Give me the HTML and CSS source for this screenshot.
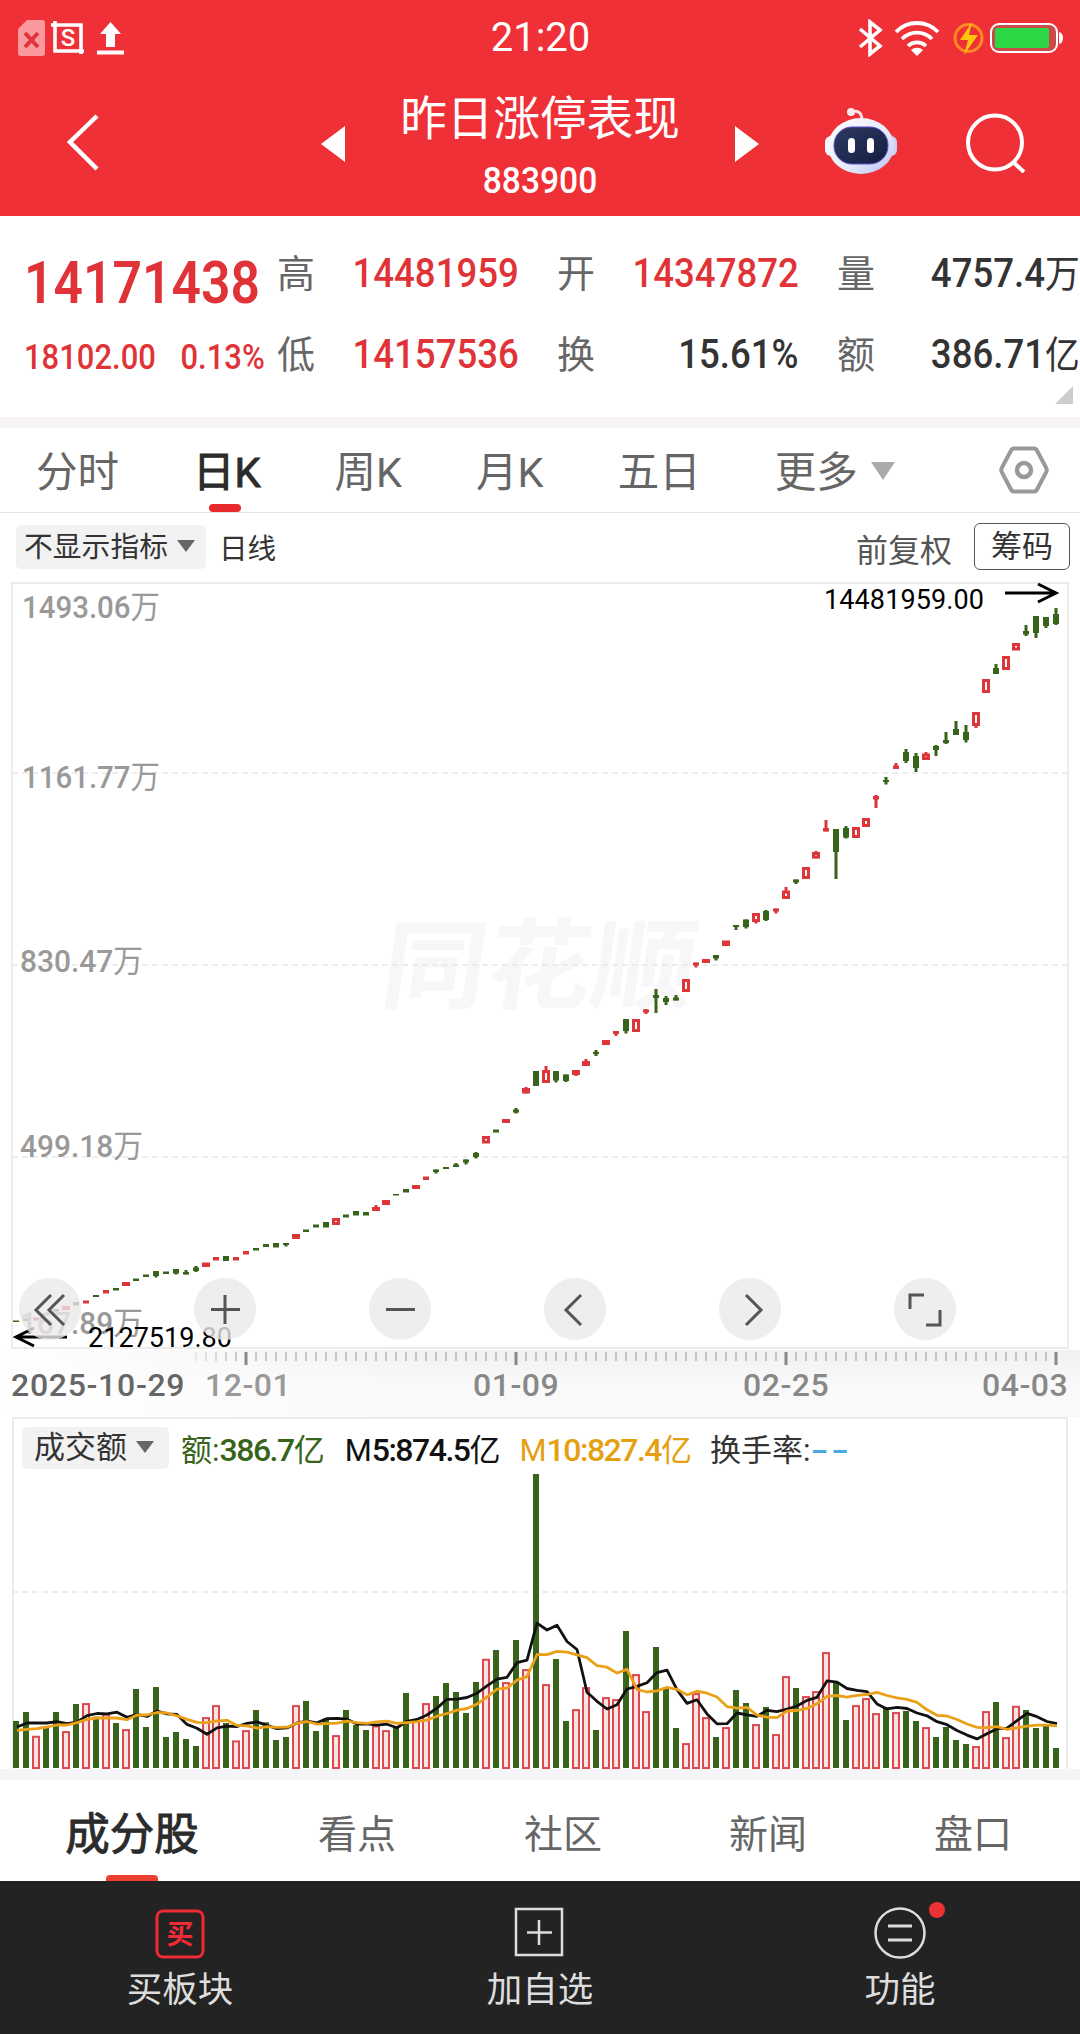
FILE: index.html
```html
<!DOCTYPE html>
<html lang="zh-CN">
<head>
  <meta charset="UTF-8" />
  <meta name="viewport" content="width=device-width, initial-scale=1.0" />
  <title>昨日涨停表现 883900</title>
  <link rel="stylesheet" href="styles.css">
</head>
<body>
  <header class="header">
    <div class="status-bar">
      <div class="status-left">
        <svg width="110" height="38" viewBox="0 0 110 38">
          <path d="M9 1h15a3 3 0 0 1 3 3v30a3 3 0 0 1-3 3H3a3 3 0 0 1-3-3V10z" fill="#fb9a9e"/>
          <path d="M7 14l13 14M20 14L7 28" stroke="#e0333b" stroke-width="4"/>
          <path d="M33 6h30v29M37 2v30h29" fill="none" stroke="#fff" stroke-width="3.6"/>
          <text x="50" y="27" class="crop-letter">S</text>
          <path d="M92.500 3l10.500 12h-6v13h-9V15h-6z" fill="#fff"/>
          <path d="M79 33.500h27" stroke="#fff" stroke-width="4"/>
        </svg>
      </div>
      <div class="clock">21:20</div>
      <div class="status-right">
        <svg width="206" height="38" viewBox="0 0 206 38">
          <path d="M3 10l20 17-10 8V3l10 8L3 28" fill="none" stroke="#fff" stroke-width="3.600"/>
          <g fill="none" stroke="#fff" stroke-width="3.800">
            <path d="M39 13a29 29 0 0 1 42 0"/>
            <path d="M45 20a21 21 0 0 1 30 0"/>
            <path d="M51 27a13 13 0 0 1 18 0"/>
          </g>
          <path d="M60 37l-6-6a9 9 0 0 1 12 0z" fill="#fff"/>
          <circle cx="111.500" cy="19" r="13.500" fill="none" stroke="#ff8a22" stroke-width="3"/>
          <path d="M115 3L103 21h8l-4 15 14-20h-9z" fill="#ffc60a"/>
          <rect x="134" y="5" width="66" height="28" rx="8" fill="#c94a48" stroke="#fff" stroke-width="2"/>
          <rect x="138" y="9" width="54" height="20" rx="2" fill="#2bd744"/>
          <path d="M202 13q4 1 4 6t-4 6z" fill="#fff"/>
        </svg>
      </div>
    </div>

    <div class="title-bar">
      <svg class="back" width="34" height="58" viewBox="0 0 34 58"><path d="M32 2L5 28l27 27" fill="none" stroke="#fff" stroke-width="4.500"/></svg>
      <svg class="prev" width="24" height="36" viewBox="0 0 24 36"><path d="M24 0v36L0 18z" fill="#fff"/></svg>
      <div class="title">
        <h1>昨日涨停表现</h1>
        <div class="code num">883900</div>
      </div>
      <svg class="next" width="24" height="36" viewBox="0 0 24 36"><path d="M0 0v36l24-18z" fill="#fff"/></svg>
      <svg class="robot" width="72" height="68" viewBox="0 0 72 68">
        <defs>
          <linearGradient id="shell" x1="0" y1="0" x2="1" y2="1">
            <stop offset="0" stop-color="#fff"/>
            <stop offset=".6" stop-color="#e4e9fb"/>
            <stop offset="1" stop-color="#b9bdf0"/>
          </linearGradient>
          <linearGradient id="face" x1="0" y1="0" x2="1" y2="1">
            <stop offset="0" stop-color="#2d3a63"/>
            <stop offset="1" stop-color="#151d40"/>
          </linearGradient>
        </defs>
        <path d="M26 5q10-3 11 7" fill="none" stroke="#fbe4ea" stroke-width="3"/>
        <circle cx="26" cy="5" r="4" fill="#fde9ee"/>
        <rect x="0" y="29" width="12" height="20" rx="6" fill="#f3f5ff"/>
        <rect x="60" y="29" width="12" height="20" rx="6" fill="#cdd2f6"/>
        <ellipse cx="36" cy="39" rx="33" ry="28" fill="url(#shell)"/>
        <rect x="9" y="20" width="54" height="37" rx="18" fill="url(#face)" stroke="#5a52c8" stroke-width="1"/>
        <rect x="23" y="31" width="7" height="15" rx="3.500" fill="#fff"/>
        <rect x="42" y="31" width="7" height="15" rx="3.500" fill="#fff"/>
      </svg>
      <svg class="search" width="62" height="62" viewBox="0 0 62 62"><circle cx="29" cy="31.500" r="27" fill="none" stroke="#fff" stroke-width="4"/><path d="M47 51l11 10" stroke="#fff" stroke-width="4"/></svg>
    </div>
  </header>

  <section class="quote">
    <div class="price">
      <div class="last num">14171438</div>
      <div class="change num"><span>18102.00</span><span>0.13%</span></div>
    </div>
    <dl class="stats">
      <div><dt>高</dt><dd class="num up">14481959</dd></div>
      <div><dt>开</dt><dd class="num up">14347872</dd></div>
      <div><dt>量</dt><dd class="num">4757.4<i>万</i></dd></div>
      <div><dt>低</dt><dd class="num up">14157536</dd></div>
      <div><dt>换</dt><dd class="num">15.61%</dd></div>
      <div><dt>额</dt><dd class="num">386.71<i>亿</i></dd></div>
    </dl>
    <span class="corner"></span>
  </section>

  <nav class="period-tabs">
    <a>分时</a>
    <a class="active">日K</a>
    <a>周K</a>
    <a>月K</a>
    <a>五日</a>
    <a class="more">更多<span class="caret"></span></a>
    <svg width="50" height="48" viewBox="0 0 50 48"><path d="M15 2.500h20q2 0 3 2l9 17q1.500 2.500 0 5l-9 17q-1 2-3 2H15q-2 0-3-2l-9-17q-1.500-2.500 0-5l9-17q1-2 3-2z" fill="none" stroke="#999" stroke-width="4"/><circle cx="25" cy="24" r="7" fill="none" stroke="#999" stroke-width="4.500"/></svg>
  </nav>

  <div class="chart-tools">
    <button class="chip">不显示指标<span class="caret dark"></span></button>
    <span class="line-type">日线</span>
    <span class="adjust">前复权</span>
    <button class="outline">筹码</button>
  </div>

  <div class="kline">
    <svg id="kline" width="1080" height="768" viewBox="0 582 1080 768">
      <text class="watermark" transform="translate(378 1001) skewX(-8)" textLength="314" lengthAdjust="spacingAndGlyphs">同花顺</text>
      <path class="frame" d="M12 1348V583h1056v765z"/>
      <path class="grid" d="M12 773h1056M12 965h1056M12 1157h1056"/>
      <g id="candles"></g>
      <g class="scale num">
        <text x="22" y="618" textLength="138" lengthAdjust="spacingAndGlyphs">1493.06<tspan class="unit">万</tspan></text>
        <text x="22" y="788" textLength="138" lengthAdjust="spacingAndGlyphs">1161.77<tspan class="unit">万</tspan></text>
        <text x="20" y="972" textLength="123" lengthAdjust="spacingAndGlyphs">830.47<tspan class="unit">万</tspan></text>
        <text x="20" y="1157" textLength="123" lengthAdjust="spacingAndGlyphs">499.18<tspan class="unit">万</tspan></text>
        <text x="20" y="1334" textLength="123" lengthAdjust="spacingAndGlyphs">167.89<tspan class="unit">万</tspan></text>
      </g>
      <g class="extreme">
        <text x="824" y="609" textLength="160">14481959.00</text>
        <path d="M1005 593h50M1038 584l18 9-18 9"/>
        <text x="88" y="1346.500" textLength="144">2127519.80</text>
        <path d="M67 1337H18M34 1328l-18 9 18 9"/>
      </g>
    </svg>
    <div class="zoom-buttons">
      <button><svg viewBox="0 0 62 62"><path d="M32 17L17 32l15 15M45 17L30 32l15 15"/></svg></button>
      <button><svg viewBox="0 0 62 62"><path d="M31 17v29M17 31.500h29"/></svg></button>
      <button><svg viewBox="0 0 62 62"><path d="M17 31.500h29"/></svg></button>
      <button><svg viewBox="0 0 62 62"><path d="M37 17L22 32l15 15"/></svg></button>
      <button><svg viewBox="0 0 62 62"><path d="M27 17l15 15-15 15"/></svg></button>
      <button><svg viewBox="0 0 62 62"><path d="M16 31V17h14M46 32v15H32"/></svg></button>
    </div>
  </div>

  <div class="axis">
    <svg id="ticks" width="1080" height="18" viewBox="0 0 1080 18"></svg>
    <div class="dates num">
      <span class="from">2025-10-29</span>
      <span class="d1">12-01</span>
      <span class="d2">01-09</span>
      <span class="d3">02-25</span>
      <span class="d4">04-03</span>
    </div>
  </div>

  <div class="volume">
    <div class="legend">
      <button class="chip">成交额<span class="caret dark"></span></button>
      <span class="amount">额:<b class="num">386.7</b>亿</span>
      <span class="m5">M<b class="num">5:874.5</b>亿</span>
      <span class="m10">M<b class="num">10:827.4</b>亿</span>
      <span class="turnover">换手率:<b>--</b></span>
    </div>
    <svg id="volume" width="1056" height="304" viewBox="12 1465 1056 304">
      <path class="grid" d="M12 1592h1056"/>
    </svg>
  </div>

  <nav class="info-tabs">
    <a class="active">成分股</a>
    <a>看点</a>
    <a>社区</a>
    <a>新闻</a>
    <a>盘口</a>
  </nav>

  <footer class="bottom-bar">
    <a>
      <svg width="52" height="52" viewBox="0 0 52 52"><rect x="3" y="4" width="46" height="46" rx="6" fill="none" stroke="#ef2b35" stroke-width="3"/><text x="26" y="37" class="buy">买</text></svg>
      <span>买板块</span>
    </a>
    <a>
      <svg width="52" height="52" viewBox="0 0 52 52"><path d="M2 2h46v46H2zM25 13v25M13 25.500h25" fill="none" stroke="#ddd" stroke-width="2.500"/></svg>
      <span>加自选</span>
    </a>
    <a>
      <svg width="52" height="52" viewBox="0 0 52 52"><circle cx="26" cy="26" r="24.500" fill="none" stroke="#ddd" stroke-width="2.500"/><path d="M14 19h24M14 33h24" stroke="#ddd" stroke-width="3"/></svg>
      <i class="dot"></i>
      <span>功能</span>
    </a>
  </footer>

  <script src="chart.js"></script>
</body>
</html>
```
FILE: styles.css
```css
* {
  box-sizing: border-box;
}

body {
  margin: 0;
  width: 1080px;
  font-family: Roboto, "Noto Sans CJK SC", sans-serif;
  background-color: #fff;
  color: #333;
}

svg {
  display: block;
  flex: none;
}

button {
  border: none;
  padding: 0;
  font-family: inherit;
  color: inherit;
}

i {
  font-style: normal;
}

.num {
  font-family: Roboto, "Noto Sans CJK SC", sans-serif;
  font-weight: 500;
}

.up {
  color: #e03338;
}

/* header */
.header {
  height: 216px;
  background-color: #ef3036;
  color: #fff;
}

.status-bar {
  height: 74px;
  display: grid;
  grid-template-columns: 1fr 120px 1fr;
  align-items: center;
  padding: 0 17px 0 18px;
}

.status-right {
  display: flex;
  justify-content: flex-end;
}

.clock {
  font-size: 40px;
  text-align: center;
  line-height: 76px;
}

.crop-letter {
  font: 500 24px Roboto, sans-serif;
  fill: #fff;
  text-anchor: middle;
}

.title-bar {
  height: 142px;
  display: flex;
  padding-left: 65px;
}

.back {
  margin-top: 40px;
}

.prev {
  margin: 52px 0 0 222px;
}

.title {
  width: 390px;
  text-align: center;
}

h1 {
  margin: 11px 0 0;
  font-size: 46.6px;
  font-weight: 400;
  line-height: 68px;
}

.code {
  font-size: 36.500px;
  line-height: 40px;
  margin-top: 8px;
  transform: scaleX(0.92);
}

.next {
  margin-top: 52px;
}

.robot {
  margin: 33px 0 0 66px;
}

.search {
  margin: 37px 0 0 69px;
}

/* quote */
.quote {
  position: relative;
  height: 212px;
  display: flex;
  border-bottom: 11px solid #f7f3f4;
}

.price {
  width: 277px;
  padding: 35px 0 0 24px;
  color: #e03338;
}

.last {
  font-size: 59px;
  font-weight: 600;
  line-height: 64px;
  transform: scaleX(0.875);
  transform-origin: left;
}

.change {
  display: flex;
  width: 272px;
  justify-content: space-between;
  font-size: 35px;
  line-height: 40px;
  margin-top: 23px;
  transform: scaleX(0.885);
  transform-origin: left;
}

.stats {
  margin: 0;
  padding-top: 27px;
  flex: 1;
  display: grid;
  grid-template-columns: 242px 280px 281px;
  grid-auto-rows: 81px;
}

.stats div {
  display: flex;
  justify-content: space-between;
  line-height: 62px;
}

.stats div + div {
  padding-left: 38px;
}

.stats div:nth-child(4) {
  padding-left: 0;
}

.stats dt {
  font-size: 38px;
  color: #666;
}

.stats dd {
  margin: 0;
  font-size: 40px;
  transform: scaleX(0.915);
  transform-origin: right;
}

.stats dd i {
  font-size: 38px;
  font-weight: 400;
}

.corner {
  position: absolute;
  right: 7px;
  bottom: 13px;
  border-left: 18px solid transparent;
  border-bottom: 18px solid #ccc;
}

/* period tabs */
.period-tabs {
  height: 85px;
  display: flex;
  align-items: center;
  padding: 0 31px 0 36px;
  border-bottom: 1px solid #e4e4e4;
  font-size: 41.500px;
  color: #666;
}

.period-tabs a {
  position: relative;
  margin-right: 74px;
  line-height: 84px;
  padding-top: 5px;
  white-space: nowrap;
}

.period-tabs .active {
  color: #2b2b2b;
  -webkit-text-stroke: 1px #2b2b2b;
}

.period-tabs .active::after {
  content: "";
  position: absolute;
  left: 16px;
  bottom: 3px;
  width: 32px;
  height: 8px;
  border-radius: 4px;
  background-color: #e8292e;
}

.period-tabs svg {
  margin-left: auto;
}

.period-tabs .more {
  margin-right: 0;
}

.caret {
  display: inline-block;
  border: 12px solid transparent;
  border-top: 18px solid #aaa;
  border-bottom: 0;
  margin-left: 13px;
  vertical-align: 7px;
}

.caret.dark {
  border-width: 12px 9px 0;
  border-top-color: #666;
  margin-left: 9px;
  vertical-align: 5px;
}

/* indicator row */
.chart-tools {
  height: 69px;
  display: flex;
  align-items: center;
  padding: 0 10px 2px 16px;
  font-size: 28.600px;
}

.chip {
  height: 44px;
  padding: 0 11px 0 8px;
  border-radius: 5px;
  background-color: #f2f2f2;
  font-size: 28.800px;
  line-height: 42px;
  white-space: nowrap;
}

.line-type {
  margin-left: 13px;
}

.adjust {
  margin-left: auto;
  padding-top: 3px;
  font-size: 32px;
  color: #555;
}

.outline {
  width: 96px;
  height: 47px;
  margin-left: 22px;
  border: 1.500px solid #555;
  border-radius: 6px;
  background-color: #fff;
  font-size: 31px;
  line-height: 44px;
}

/* k line */
.kline {
  position: relative;
  height: 768px;
}

.frame {
  fill: none;
  stroke: #ececec;
  stroke-width: 2;
}

.grid {
  stroke: #e8e8e8;
  stroke-width: 1.500;
  stroke-dasharray: 6 4;
}

.watermark {
  font: 700 98px "Noto Sans CJK SC", sans-serif;
  fill: #f7f7f7;
}

.scale {
  font-size: 32px;
  fill: #999;
}

.unit {
  font-size: 32px;
  font-weight: 400;
}

.extreme text {
  font: 400 27px Roboto, sans-serif;
  fill: #000;
}

.extreme path {
  fill: none;
  stroke: #000;
  stroke-width: 3;
}

.zoom-buttons {
  position: absolute;
  left: 19px;
  top: 696px;
  display: flex;
  gap: 113px;
}

.zoom-buttons button {
  width: 62px;
  height: 62px;
  border-radius: 50%;
  background-color: rgba(235, 232, 234, 0.800);
}

.zoom-buttons path {
  fill: none;
  stroke: #555;
  stroke-width: 3;
}

.red {
  fill: #fff;
  stroke: #dc363b;
}

.red-fill {
  fill: #dc363b;
}

.green {
  fill: #37641a;
}

.volume .red {
  fill: #fbe3e3;
  stroke: #dc4a4e;
}

/* date axis */
.axis {
  height: 67px;
  background: linear-gradient(to right, #fff, rgba(255, 255, 255, 0) 40%), linear-gradient(#f0f0f0, #f9f9f9 50%);
}

.tick {
  stroke: #999;
}

.tick.major {
  stroke: #888;
  stroke-width: 3;
}

.dates {
  display: grid;
  grid-template-columns: 194px 268px 270px 239px 1fr;
  padding-left: 11px;
  font-size: 32px;
  line-height: 35px;
  letter-spacing: 0.500px;
  color: #888;
  white-space: nowrap;
}

.dates .from {
  letter-spacing: 0.700px;
  color: #666;
}

.dates .d1 {
  color: #999;
}

/* volume */
.volume {
  width: 1056px;
  height: 352px;
  margin-left: 12px;
  border: 2px solid #ececec;
  border-bottom: 0;
}

.volume svg {
  margin-left: -2px;
}

.legend {
  height: 46px;
  display: flex;
  align-items: center;
  padding: 11px 0 0 8px;
  font-size: 31px;
  white-space: nowrap;
}

.legend .chip {
  width: 147px;
  height: 42px;
  font-size: 31px;
  line-height: 40px;
}

.legend b {
  letter-spacing: -1.500px;
  font-size: 32px;
}

.legend .amount {
  margin-left: 12px;
  color: #37641a;
}

.legend .m5 {
  margin-left: 20px;
  color: #111;
}

.legend .m10 {
  margin-left: 19px;
  color: #e5a012;
}

.legend .turnover {
  margin-left: 18px;
}

.legend .turnover b {
  display: inline-block;
  color: #4aa8e6;
  font-weight: 500;
  letter-spacing: 2px;
  transform: scaleX(1.600);
  transform-origin: left;
}

.ma {
  fill: none;
  stroke-width: 2.800;
  stroke-linejoin: round;
}

/* info tabs */
.info-tabs {
  height: 112px;
  border-top: 11px solid #f5f5f7;
  display: grid;
  grid-template-columns: 264px 186px 226px 184px 226px;
  text-align: center;
  font-size: 39px;
  line-height: 110px;
  color: #666;
}

.info-tabs a {
  height: 101px;
}

.info-tabs .active {
  position: relative;
  font-size: 44.500px;
  color: #2b2b2b;
  -webkit-text-stroke: 1px #2b2b2b;
}

.info-tabs .active::after {
  content: "";
  position: absolute;
  left: 106px;
  bottom: 0;
  width: 52px;
  height: 6px;
  border-radius: 4px 4px 0 0;
  background-color: #ee3f33;
}

/* bottom bar */
.bottom-bar {
  height: 153px;
  background-color: #232323;
  display: grid;
  grid-template-columns: repeat(3, 1fr);
  color: #ddd;
  font-size: 35.500px;
}

.bottom-bar a {
  position: relative;
  display: flex;
  flex-direction: column;
  align-items: center;
  padding-top: 26px;
  line-height: 62px;
}

.buy {
  font: 700 27px "Noto Sans CJK SC", sans-serif;
  fill: #ef2b35;
  text-anchor: middle;
}

.dot {
  position: absolute;
  left: 209px;
  top: 21px;
  width: 16px;
  height: 16px;
  border-radius: 50%;
  background-color: #ee3135;
}
```
FILE: chart.js
```js
const SVG_NS = 'http://www.w3.org/2000/svg';
const STEP = 10;
const FIRST_X = 16;

// type, body top, body bottom, high, low
const candles = [
  'g 1320.5 1322', 'g 1318.500 1321', 'r 1317.500 1320.500', 'g 1313 1315.500', 'g 1309 1311.500',
  'r 1306 1310', 'g 1302 1305.500', 'r 1300.500 1303.500', 'g 1295 1297', 'r 1290 1293.500',
  'g 1288 1290.500', 'r 1282 1286', 'g 1278.500 1281', 'g 1274.500 1277', 'g 1271 1276 1271 1277.500',
  'g 1271.500 1274', 'g 1269 1273.500 1269 1274.500', 'g 1272 1274.500 1270 1274.500', 'g 1267.500 1271 1266 1272', 'r 1262.500 1267',
  'r 1257 1260.500', 'g 1256 1261', 'r 1257 1260.500', 'r 1251 1254.500', 'g 1248 1250.500',
  'g 1244 1247', 'g 1243 1247.500', 'g 1243 1245 1243 1246.500', 'r 1234 1239', 'g 1229.500 1232',
  'g 1224.500 1227.500', 'g 1222 1227.500', 'r 1218 1225', 'g 1214.500 1217.500', 'g 1211 1215.500',
  'g 1212 1215.500', 'r 1207 1211 1205 1211', 'r 1200 1205', 'g 1194 1195.500', 'g 1189 1192.500',
  'r 1185 1189', 'r 1176.500 1180', 'g 1169.500 1172 1169.500 1173.500', 'g 1167 1169', 'g 1164.500 1167 1163 1167',
  'g 1159.500 1162.500 1159.500 1164.500', 'g 1153 1157 1152 1158.500', 'r 1136 1143.500', 'g 1129.500 1132.500', 'r 1119 1123',
  'g 1109.500 1112.500 1108 1113.500', 'r 1088 1093.500 1087 1093.500', 'g 1071 1086', 'r 1070 1083 1066 1083', 'g 1071 1080.500 1071 1082.500',
  'g 1074.500 1081 1074.500 1082', 'r 1070 1075 1070 1076', 'r 1061 1066 1059 1066', 'g 1052 1054 1050 1056', 'r 1040 1045',
  'r 1031 1034 1031 1036', 'g 1019 1031 1019 1033.500', 'r 1019 1032', 'r 1009.500 1012.500 1009 1014', 'g 995 998 989 1013',
  'g 998 1002 996 1005', 'g 997.500 1000.500 995 1000.500', 'r 979 992', 'r 962.500 965.500 962.500 967.500', 'r 959 963',
  'g 955 958.500 955 960.500', 'r 940.500 946', 'g 925 927 925 930', 'g 919.500 927 919.500 928.500', 'r 913 922 913 923.500',
  'g 911 920 910 921', 'r 908.500 911.500 908.500 913.500', 'r 890.500 899 887 899', 'g 879.500 882.500 879.500 884', 'r 867 879',
  'r 852 858.500 851 858.500', 'r 828 831.500 820 831.500', 'g 829 852 829 879', 'g 828 837.500 826 838.500', 'r 827 838',
  'r 818 827', 'r 796 799.500 795 808', 'g 780 782 777 784.500', 'r 765.500 769 763 769', 'g 752 761 749 763',
  'g 756 768 753 772', 'r 753.500 760 752 760', 'g 746 750 745 756', 'g 740 743 732 744', 'g 729 735 721 735',
  'g 732 740 725 742.500', 'r 712 726 712 728', 'r 679 693', 'g 668 674 664 674', 'r 656 670',
  'r 643 650.500', 'g 631 634.500 625 636', 'g 616 633 616 638', 'g 617 626 617 628', 'g 614 624 608 625'
];

const amounts = [
  141, 168, 96, 122, 168, 110, 192, 194, 154, 162, 135, 116, 237, 123, 243,
  93, 108, 87, 66, 152, 188, 135, 82, 113, 174, 137, 84, 93, 188, 201,
  111, 148, 98, 174, 129, 114, 127, 113, 122, 225, 141, 194, 216, 255, 228,
  165, 258, 327, 354, 257, 384, 296, 882, 251, 327, 141, 176, 242, 114, 212,
  206, 411, 281, 170, 363, 242, 120, 74, 224, 152, 93, 122, 234, 195, 131,
  183, 101, 275, 240, 215, 230, 347, 257, 144, 188, 209, 164, 182, 167, 171,
  141, 122, 93, 123, 84, 72, 65, 170, 198, 92, 186, 174, 120, 126, 60
];

// values carried over from the days before the first bar
const ma5Head = [123, 135, 135, 135];
const ma10Head = [113, 116, 118, 123, 129, 129, 136, 146, 150];

function add(parent, name, attrs) {
  const el = document.createElementNS(SVG_NS, name);
  for (const key in attrs) {
    el.setAttribute(key, attrs[key]);
  }
  parent.appendChild(el);
}

function drawCandles() {
  const group = document.getElementById('candles');
  candles.forEach((row, i) => {
    const parts = row.split(' ');
    const [top, bottom, high, low] = parts.slice(1).map(Number);
    const x = FIRST_X + i * STEP;
    const fill = parts[0] === 'g' ? 'green' : 'red-fill';
    if (high) {
      add(group, 'rect', { x: x - 1.5, y: high, width: 3, height: low - high, class: fill });
    }
    if (parts[0] === 'r' && bottom - top > 6) {
      add(group, 'rect', { x: x - 2.5, y: top + 1.5, width: 5, height: bottom - top - 3, class: 'red', 'stroke-width': 3 });
    } else {
      const w = parts[0] === 'r' && bottom - top >= 4 ? 8 : 6;
      add(group, 'rect', { x: x - w / 2, y: top, width: w, height: bottom - top, class: fill });
    }
  });
}

function average(days, head) {
  return amounts.map((v, i) => {
    if (i < head.length) return head[i];
    const part = amounts.slice(i - days + 1, i + 1);
    return part.reduce((a, b) => a + b, 0) / days;
  });
}

function drawVolume() {
  const svg = document.getElementById('volume');
  const base = 1768;
  amounts.forEach((v, i) => {
    const x = FIRST_X + i * STEP;
    const h = v / 3;
    if (candles[i][0] === 'g') {
      add(svg, 'rect', { x: x - 3, y: base - h, width: 6, height: h, class: 'green' });
    } else {
      add(svg, 'rect', { x: x - 3, y: base - h + 0.75, width: 6, height: h - 0.75, class: 'red', 'stroke-width': 2 });
    }
  });
  [[5, ma5Head, '#111'], [10, ma10Head, '#eaa018']].forEach(([days, head, color]) => {
    const points = average(days, head).map((v, i) => `${FIRST_X + 1 + i * STEP},${(base - v / 3).toFixed(1)}`);
    add(svg, 'polyline', { points: points.join(' '), class: 'ma', stroke: color });
  });
}

function drawTicks() {
  const svg = document.getElementById('ticks');
  for (let x = 196; x <= 1056; x += STEP) {
    const major = (x - 246) % 270 === 0;
    add(svg, 'path', {
      d: `M${x} 2v${major ? 13 : 9}`,
      class: major ? 'tick major' : 'tick',
      opacity: Math.min(1, (x - 176) / 60)
    });
  }
}

drawCandles();
drawVolume();
drawTicks();
```
